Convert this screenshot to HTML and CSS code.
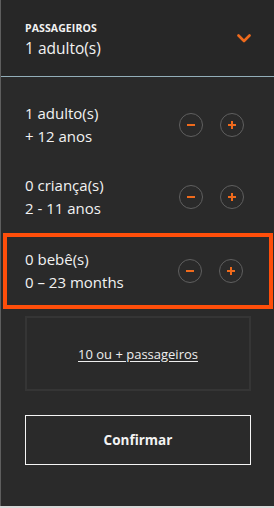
FILE: index.html
```html
<!DOCTYPE html>
<html lang="pt">
<head>
<meta charset="utf-8">
<link rel="stylesheet" href="styles.css">
</head>
<body>
<div class="panel">
  <div class="header">
    <div class="header-text">
      <div class="label">PASSAGEIROS</div>
      <div class="value">1 adulto(s)</div>
    </div>
    <svg class="chevron" width="14" height="9" viewBox="0 0 14 9"><polyline points="1.5,1.5 7,7 12.5,1.5" fill="none" stroke="#ef6a1c" stroke-width="2.6" stroke-linecap="round" stroke-linejoin="round"/></svg>
  </div>
  <div class="rows">
    <div class="row">
      <div class="row-text"><div>1 adulto(s)</div><div>+ 12 anos</div></div>
      <div class="btns">
        <span class="btn"><svg width="10" height="10" viewBox="0 0 10 10"><rect x="1" y="4" width="8" height="2" fill="#ef6a1c"/></svg></span>
        <span class="btn"><svg width="10" height="10" viewBox="0 0 10 10"><rect x="1" y="4" width="8" height="2" fill="#ef6a1c"/><rect x="4" y="1" width="2" height="8" fill="#ef6a1c"/></svg></span>
      </div>
    </div>
    <div class="row">
      <div class="row-text"><div>0 criança(s)</div><div>2 - 11 anos</div></div>
      <div class="btns">
        <span class="btn"><svg width="10" height="10" viewBox="0 0 10 10"><rect x="1" y="4" width="8" height="2" fill="#ef6a1c"/></svg></span>
        <span class="btn"><svg width="10" height="10" viewBox="0 0 10 10"><rect x="1" y="4" width="8" height="2" fill="#ef6a1c"/><rect x="4" y="1" width="2" height="8" fill="#ef6a1c"/></svg></span>
      </div>
    </div>
    <div class="row selected">
      <div class="row-text"><div>0 bebê(s)</div><div>0 – 23 months</div></div>
      <div class="btns">
        <span class="btn"><svg width="10" height="10" viewBox="0 0 10 10"><rect x="1" y="4" width="8" height="2" fill="#ef6a1c"/></svg></span>
        <span class="btn"><svg width="10" height="10" viewBox="0 0 10 10"><rect x="1" y="4" width="8" height="2" fill="#ef6a1c"/><rect x="4" y="1" width="2" height="8" fill="#ef6a1c"/></svg></span>
      </div>
    </div>
  </div>
  <div class="group-box"><a class="group-link" href="#">10 ou + passageiros</a></div>
  <div class="confirm">Confirmar</div>
</div>
</body>
</html>
```
FILE: styles.css
```css
html, body {
  margin: 0;
  padding: 0;
}
body {
  background: #d8d8d8;
  font-family: "Open Sans", "Noto Sans", sans-serif;
  color: #f2f2f2;
}
.panel {
  box-sizing: border-box;
  width: 274px;
  height: 506px;
  background: #2a2a2a;
  border-left: 1px solid #5e5e5e;
  display: flex;
  flex-direction: column;
}
.header {
  box-sizing: border-box;
  height: 77px;
  background: #272727;
  border-bottom: 1px solid #93aeb9;
  display: flex;
  justify-content: space-between;
  align-items: flex-start;
  padding: 21px 23px 0 24px;
}
.label {
  font-size: 10.5px;
  font-weight: 700;
  line-height: 14px;
  letter-spacing: 0.1px;
}
.value {
  font-size: 15.5px;
  line-height: 20px;
  margin-top: 3px;
}
.chevron {
  margin-top: 13px;
}
.rows {
  padding-top: 12px;
  display: flex;
  flex-direction: column;
}
.row {
  box-sizing: border-box;
  height: 72px;
  display: flex;
  align-items: center;
  justify-content: space-between;
  padding: 0 30px 0 24px;
}
.row-text {
  font-size: 15px;
  line-height: 23px;
}
.row.selected {
  height: 76px;
  margin: 0 1px 0 2px;
  border: 4px solid #ff4e0a;
  padding: 0 26px 0 18px;
}
.btns {
  display: flex;
  gap: 17px;
}
.btn {
  box-sizing: border-box;
  width: 24px;
  height: 24px;
  border: 1.5px solid #5f5f5f;
  border-radius: 50%;
  display: flex;
  align-items: center;
  justify-content: center;
}
.group-box {
  box-sizing: border-box;
  margin: 7px 23px 0 24px;
  height: 75px;
  border: 2px solid #353535;
  display: flex;
  align-items: center;
  justify-content: center;
}
.group-link {
  color: #eeeeee;
  font-size: 13px;
  text-decoration: underline;
  text-underline-offset: 2px;
}
.confirm {
  box-sizing: border-box;
  margin: 24px 23px 0 24px;
  height: 50px;
  border: 1px solid #f5f5f5;
  display: flex;
  align-items: center;
  justify-content: center;
  font-size: 13.5px;
  font-weight: 700;
}
```
